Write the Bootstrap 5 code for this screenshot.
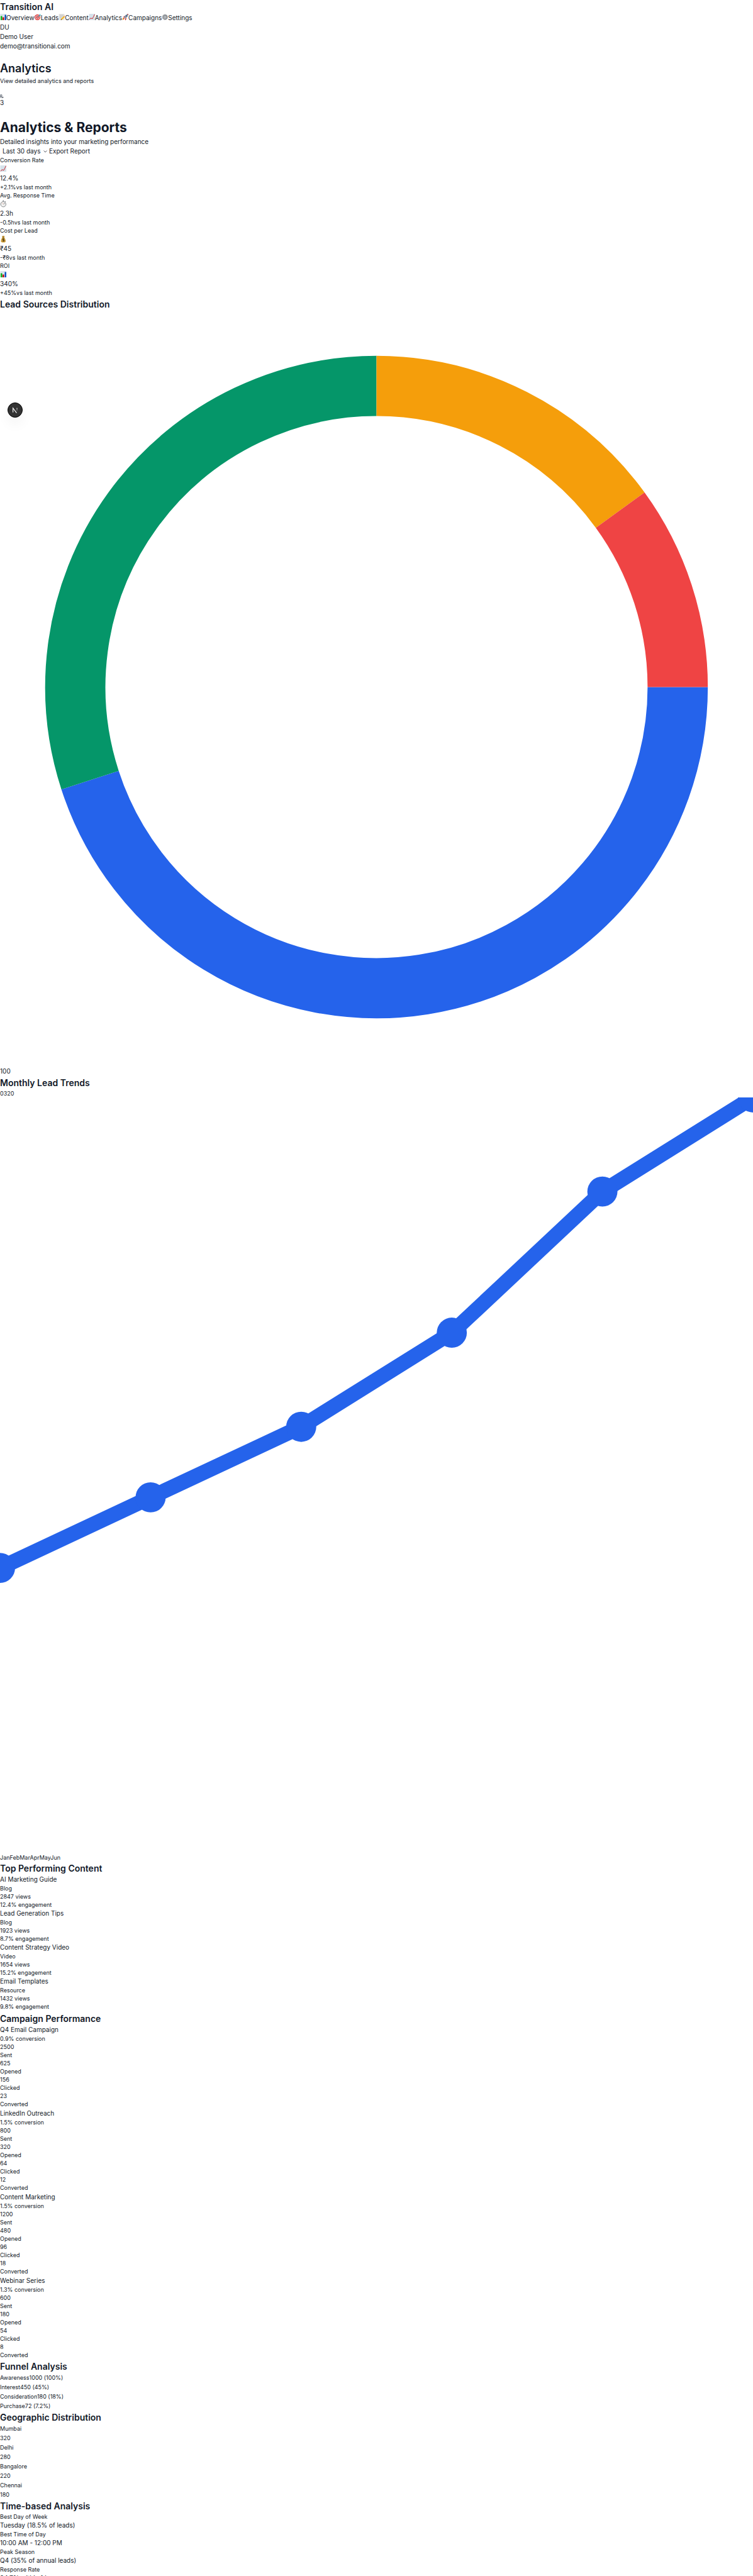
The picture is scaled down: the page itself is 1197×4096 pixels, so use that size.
<!DOCTYPE html>
<html lang="en">
<head>
<meta charset="utf-8">
<meta name="viewport" content="width=device-width, initial-scale=1">
<title>Transition AI - Analytics</title>
<link href="https://cdn.jsdelivr.net/npm/bootstrap@5.3.0/dist/css/bootstrap.min.css" rel="stylesheet">
<style>
  body { font-family: Inter, "Liberation Sans", sans-serif; font-size: 10px; line-height: 15px; color: #111827; background: #fff; }
  h1, h2, h3, p { margin: 0; font-weight: 600; }
  p { font-weight: 400; }
  h2, .brand { font-size: 14px; line-height: 21px; font-weight: 600; }
  .page-title { font-size: 18px; line-height: 26px; }
  .report-title { font-size: 21px; line-height: 30px; font-weight: 700; }
  .fine { font-size: 9px; line-height: 13px; }
  .loose { font-size: 9px; line-height: 15px; }
  .main-nav a { color: inherit; text-decoration: none; }
  .emo { width: 10px; height: 12px; flex: none; display: block; }
  .emo-row { height: 15px; padding-top: 1px; }
  .top-block { padding-top: 15px; padding-bottom: 17px; }
  .bell { display: block; width: 6px; height: 6px; }
  .alerts { padding-top: 15px; }
  .plain-btn { border: 0; background: none; padding: 0; color: inherit; font-size: 10px; line-height: 15px; }
  .range.form-select { width: 78px; border: 0; border-radius: 0; padding: 0 12px 0 4px; font-size: 10px; line-height: 15px; min-height: 0; height: 15px; color: inherit;
    background-color: transparent; background-position: right 3px center; background-size: 6px 6px;
    background-image: url("data:image/svg+xml,%3csvg xmlns='http://www.w3.org/2000/svg' viewBox='0 0 12 12'%3e%3cpath fill='none' stroke='%23111827' stroke-width='1.4' d='M1 3l5 5 5-5'/%3e%3c/svg%3e"); }
  .metrics { padding-bottom: 1px; }
  .chart { display: block; width: 100%; height: auto; margin-bottom: 5px; }
  .content-list { padding-bottom: 2px; }
  .campaign { padding-bottom: 1px; }
  .dev-badge { left: 12px; top: 640px; width: 24px; height: 24px; border: 1px solid #000; border-radius: 50%; background: #333; padding: 0; box-shadow: 0 10px 20px rgba(0, 0, 0, .05); }
  .dev-badge svg { display: block; width: 22px; height: 22px; }
</style>
</head>
<body class="vh-100 overflow-hidden position-relative">

<svg class="position-absolute" width="0" height="0" aria-hidden="true">
  <defs>
    <symbol id="i-bars" viewBox="0 0 20 24"><rect x="1" y="2" width="19" height="20" fill="#dae5ec"/><rect x="2" y="9" width="5" height="13" fill="#0caf1a"/><rect x="8" y="13" width="5" height="9" fill="#c00d12"/><rect x="15" y="5" width="5" height="17" fill="#0b55c4"/></symbol>
    <symbol id="i-target" viewBox="0 0 20 24"><circle cx="9" cy="13" r="9" fill="#d92b2b"/><circle cx="9" cy="13" r="6.6" fill="#f6dcdc"/><circle cx="9" cy="13" r="4.6" fill="#d92b2b"/><circle cx="9" cy="13" r="2.2" fill="#f6dcdc"/><path d="M9 13L17 6" stroke="#2c7f96" stroke-width="2"/><path d="M14 6l4-4 .5 3 1.500 2-4 3z" fill="#3fb6cf"/></symbol>
    <symbol id="i-memo" viewBox="0 0 20 24"><rect x="1" y="2" width="18" height="20" fill="#e4e4e2"/><path d="M4 6h12M4 9h11M4 12h8M4 15h5" stroke="#a5a5a2" stroke-width="1.200" stroke-dasharray="2 1"/><path d="M8 18L17 9l3 3-9 9z" fill="#f2b51f"/><path d="M17 9l2-2 1 5z" fill="#e58080"/><path d="M8 18l3 3-4 1z" fill="#5b4a2c"/></symbol>
    <symbol id="i-chart" viewBox="0 0 20 24"><rect x="1" y="2" width="19" height="20" fill="#d6e2ea"/><path d="M2 20.500l4-5 6 2 3-6 4-8" fill="none" stroke="#c8161c" stroke-width="1.800"/></symbol>
    <symbol id="i-rocket" viewBox="0 0 20 24"><path d="M0 22l3-8 5 4z" fill="#f7a21b"/><path d="M4 12l5-4 2 2-5 5zM10 18l4-5-1 7-3 3z" fill="#c9252b"/><path d="M20 2c-6 0-11 5-14 12l3 3c7-3 11-8 11-15z" fill="#8e9aa6"/><path d="M20 2l-4 1 3 3z" fill="#c9252b"/><circle cx="14" cy="8.500" r="2.200" fill="#2b5f93"/><path d="M5 15l3 3-4 2z" fill="#c9252b"/></symbol>
    <symbol id="i-gear" viewBox="0 0 20 24"><circle cx="10.500" cy="12.500" r="8.600" fill="none" stroke="#83888d" stroke-width="2" stroke-dasharray="2 1.400"/><circle cx="10.500" cy="12.500" r="6.200" fill="#c9cdd1" stroke="#6d7278" stroke-width="2.400"/><circle cx="10.500" cy="12.500" r="2" fill="#fff" stroke="#5c6167" stroke-width="1.400"/></symbol>
    <symbol id="i-watch" viewBox="0 0 20 24"><path d="M9 1h3v4H9zM16 3l3 3-2 1-2-2z" fill="#7b7f83"/><circle cx="10.500" cy="13.500" r="8.300" fill="#f1f1f0" stroke="#85898c" stroke-width="2"/><path d="M10.500 13.500L16 10" stroke="#54585c" stroke-width="1.200"/><path d="M10.500 13.500L7 9" stroke="#e0846e"/></symbol>
    <symbol id="i-bag" viewBox="0 0 20 24"><path d="M6 2l2 1 2.500-1.500L13 3l2-1-2 6H8z" fill="#b98a2c"/><path d="M8 7h5c3 3 5 8 5 12 0 3-2 4-7.500 4S3 22 3 19c0-4 2-9 5-12z" fill="#cf9f38"/><path d="M7.500 7.500h6" stroke="#6d4d16" stroke-width="1.400"/><path d="M13.500 12.500c-1-1.600-5.500-1.800-5.500.6 0 2.600 6 1.200 6 4 0 2.400-5 2.400-6.200.5M10.800 10v10" fill="none" stroke="#2d2414" stroke-width="1.500"/></symbol>
  </defs>
</svg>

<aside>
  <div class="brand">Transition AI</div>
  <nav class="main-nav d-flex" aria-label="Main">
    <a class="d-flex" href="#overview"><svg class="emo"><use href="#i-bars"/></svg>Overview</a>
    <a class="d-flex" href="#leads"><svg class="emo"><use href="#i-target"/></svg>Leads</a>
    <a class="d-flex" href="#content"><svg class="emo"><use href="#i-memo"/></svg>Content</a>
    <a class="d-flex" href="#analytics"><svg class="emo"><use href="#i-chart"/></svg>Analytics</a>
    <a class="d-flex" href="#campaigns"><svg class="emo"><use href="#i-rocket"/></svg>Campaigns</a>
    <a class="d-flex" href="#settings"><svg class="emo"><use href="#i-gear"/></svg>Settings</a>
  </nav>
  <div>DU</div>
  <div>Demo User</div>
  <div>demo@transitionai.com</div>
</aside>

<header class="top-block">
  <h1 class="page-title">Analytics</h1>
  <p class="fine">View detailed analytics and reports</p>
  <div class="alerts">
    <svg class="bell" viewBox="0 0 9 9" aria-label="Notifications"><path d="M1 1h3.500v6.500H1zM1 3.200h3.500M1 5.300h3.500" fill="none" stroke="#4b5563"/><path d="M5.500 8.500L7.800 6.200" stroke="#111827" stroke-width="1.600"/></svg>
    <div>3</div>
  </div>
</header>

<main>
  <h1 class="report-title">Analytics &amp; Reports</h1>
  <p>Detailed insights into your marketing performance</p>
  <div class="d-flex">
    <select class="form-select range" aria-label="Date range"><option>Last 30 days</option><option>Last 7 days</option><option>Last 90 days</option></select>
    <button type="button" class="plain-btn">Export Report</button>
  </div>

  <section class="metrics">
    <div><div class="fine">Conversion Rate</div><div class="emo-row"><svg class="emo"><use href="#i-chart"/></svg></div><div>12.4%</div><div class="fine"><span>+2.1%</span><span>vs last month</span></div></div>
    <div><div class="fine">Avg. Response Time</div><div class="emo-row"><svg class="emo"><use href="#i-watch"/></svg></div><div>2.3h</div><div class="fine"><span>-0.5h</span><span>vs last month</span></div></div>
    <div><div class="fine">Cost per Lead</div><div class="emo-row"><svg class="emo"><use href="#i-bag"/></svg></div><div>₹45</div><div class="fine"><span>-₹8</span><span>vs last month</span></div></div>
    <div><div class="fine">ROI</div><div class="emo-row"><svg class="emo"><use href="#i-bars"/></svg></div><div>340%</div><div class="fine"><span>+45%</span><span>vs last month</span></div></div>
  </section>

  <section>
    <h2>Lead Sources Distribution</h2>
    <svg class="chart" viewBox="0 0 100 100" fill="none" stroke-width="8" role="img" aria-label="Lead sources">
      <path d="M90 50A40 40 0 0 1 11.958 62.361" stroke="#2563eb"/>
      <path d="M11.958 62.361A40 40 0 0 1 50 10" stroke="#059669"/>
      <path d="M50 10A40 40 0 0 1 82.361 26.489" stroke="#f59e0b"/>
      <path d="M82.361 26.489A40 40 0 0 1 90 50" stroke="#ef4444"/>
    </svg>
    <div>100</div>
  </section>

  <section>
    <h2>Monthly Lead Trends</h2>
    <div class="fine"><span>0</span><span>320</span></div>
    <svg class="chart" viewBox="0 0 100 100" role="img" aria-label="Monthly leads">
      <polyline points="0,62.5 20,53.125 40,43.75 60,31.25 80,12.5 100,0" fill="none" stroke="#2563eb" stroke-width="2"/>
      <g fill="#2563eb"><circle cx="0" cy="62.5" r="2"/><circle cx="20" cy="53.125" r="2"/><circle cx="40" cy="43.75" r="2"/><circle cx="60" cy="31.25" r="2"/><circle cx="80" cy="12.5" r="2"/><circle cx="100" cy="0" r="2"/></g>
    </svg>
    <div class="fine"><span>Jan</span><span>Feb</span><span>Mar</span><span>Apr</span><span>May</span><span>Jun</span></div>
  </section>

  <section>
    <h2>Top Performing Content</h2>
    <div class="content-list">
      <div>AI Marketing Guide</div><div class="fine">Blog</div><div class="fine">2847 views</div><div class="fine">12.4% engagement</div>
      <div>Lead Generation Tips</div><div class="fine">Blog</div><div class="fine">1923 views</div><div class="fine">8.7% engagement</div>
      <div>Content Strategy Video</div><div class="fine">Video</div><div class="fine">1654 views</div><div class="fine">15.2% engagement</div>
      <div>Email Templates</div><div class="fine">Resource</div><div class="fine">1432 views</div><div class="fine">9.8% engagement</div>
    </div>
  </section>

  <section>
    <h2>Campaign Performance</h2>
    <div class="campaign">
      <div>Q4 Email Campaign</div>
      <div class="fine"><div>0.9% conversion</div><div>2500</div><div>Sent</div><div>625</div><div>Opened</div><div>156</div><div>Clicked</div><div>23</div><div>Converted</div></div>
    </div>
    <div class="campaign">
      <div>LinkedIn Outreach</div>
      <div class="fine"><div>1.5% conversion</div><div>800</div><div>Sent</div><div>320</div><div>Opened</div><div>64</div><div>Clicked</div><div>12</div><div>Converted</div></div>
    </div>
    <div class="campaign">
      <div>Content Marketing</div>
      <div class="fine"><div>1.5% conversion</div><div>1200</div><div>Sent</div><div>480</div><div>Opened</div><div>96</div><div>Clicked</div><div>18</div><div>Converted</div></div>
    </div>
    <div class="campaign">
      <div>Webinar Series</div>
      <div class="fine"><div>1.3% conversion</div><div>600</div><div>Sent</div><div>180</div><div>Opened</div><div>54</div><div>Clicked</div><div>8</div><div>Converted</div></div>
    </div>
  </section>

  <section>
    <h2>Funnel Analysis</h2>
    <div class="loose">
      <div><span>Awareness</span><span>1000 (100%)</span></div>
      <div><span>Interest</span><span>450 (45%)</span></div>
      <div><span>Consideration</span><span>180 (18%)</span></div>
      <div><span>Purchase</span><span>72 (7.2%)</span></div>
    </div>
  </section>

  <section>
    <h2>Geographic Distribution</h2>
    <div class="loose">
      <div><div>Mumbai</div><div>320</div></div>
      <div><div>Delhi</div><div>280</div></div>
      <div><div>Bangalore</div><div>220</div></div>
      <div><div>Chennai</div><div>180</div></div>
    </div>
  </section>

  <section>
    <h2>Time-based Analysis</h2>
    <div class="fine">Best Day of Week</div><div>Tuesday (18.5% of leads)</div>
    <div class="fine">Best Time of Day</div><div>10:00 AM - 12:00 PM</div>
    <div class="fine">Peak Season</div><div>Q4 (35% of annual leads)</div>
    <div class="fine">Response Rate</div><div>94.7% within 1 hour</div>
  </section>
</main>

<button type="button" class="dev-badge position-absolute" aria-label="Open developer tools">
  <svg viewBox="0 0 36 36"><defs><linearGradient id="fade" x1="0" y1="0" x2="0" y2="1"><stop offset="0" stop-color="#fff"/><stop offset="1" stop-color="#fff" stop-opacity="0"/></linearGradient></defs><path d="M12.500 24V13l9.500 12.500" fill="none" stroke="#fff" stroke-width="1.800"/><rect x="22" y="12.500" width="1.800" height="9" fill="url(#fade)"/></svg>
</button>

<script src="https://cdn.jsdelivr.net/npm/bootstrap@5.3.0/dist/js/bootstrap.bundle.min.js"></script>
</body>
</html>
